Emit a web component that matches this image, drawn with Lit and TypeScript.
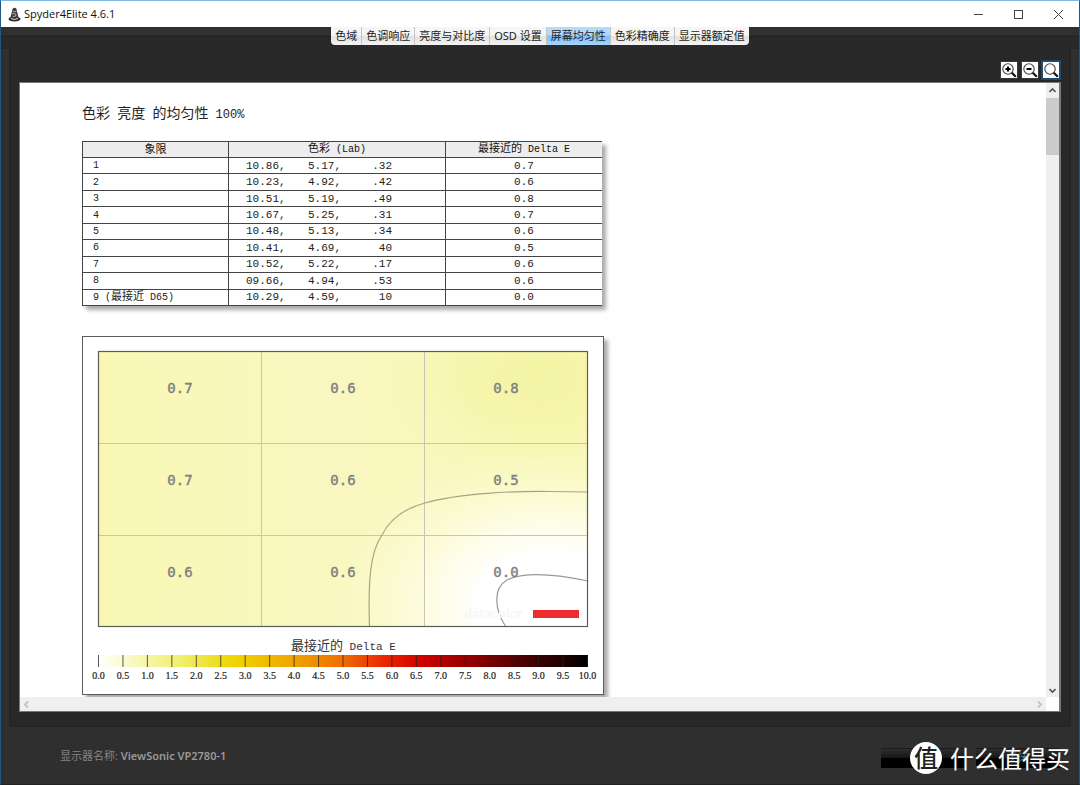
import { LitElement, html, svg, css } from "lit";
import { customElement, state } from "lit/decorators.js";
import { classMap } from "lit/directives/class-map.js";

const TABS = ["色域", "色调响应", "亮度与对比度", "OSD 设置", "屏幕均匀性", "色彩精确度", "显示器额定值"];

const ROWS: [string, string, string, string, string][] = [
  ["1", "10.86,", "5.17,", ".32", "0.7"],
  ["2", "10.23,", "4.92,", ".42", "0.6"],
  ["3", "10.51,", "5.19,", ".49", "0.8"],
  ["4", "10.67,", "5.25,", ".31", "0.7"],
  ["5", "10.48,", "5.13,", ".34", "0.6"],
  ["6", "10.41,", "4.69,", "40", "0.5"],
  ["7", "10.52,", "5.22,", ".17", "0.6"],
  ["8", "09.66,", "4.94,", ".53", "0.6"],
  ["9", "10.29,", "4.59,", "10", "0.0"],
];

const GRID = [
  ["0.7", "0.6", "0.8"],
  ["0.7", "0.6", "0.5"],
  ["0.6", "0.6", "0.0"],
];

@customElement("uniformity-chart")
class UniformityChart extends LitElement {
  static styles = css`
    :host {
      display: block;
      box-sizing: border-box;
      width: 522px;
      border: 1px solid #5c5c5c;
      background: #fff;
      box-shadow: 4px 4px 4px #aaa;
    }
    .chart {
      display: block;
      width: 100%;
    }
    .value {
      font: 14px "DejaVu Sans Mono", "Liberation Mono", monospace;
      fill: #808080;
      stroke: #808080;
      stroke-width: 0.4;
      text-anchor: middle;
    }
    .legend {
      font: 13px "Liberation Mono", "Noto Sans CJK SC", monospace;
      fill: #333;
    }
    .latin {
      font-size: 11px;
    }
    .tick {
      font: 10px "Liberation Serif", serif;
      fill: #222;
      stroke: #222;
      stroke-width: 0.2;
      text-anchor: middle;
    }
    .brand {
      font: bold 14px "Lato", sans-serif;
      fill: #f7f7f6;
    }
  `;

  render() {
    const ticks = Array.from({ length: 21 }, (_, i) => i);
    return html`
      <svg class="chart" viewBox="0 0 520 357" role="img" aria-label="最接近的 Delta E">
        <defs>
          <linearGradient id="base">
            <stop offset="0" stop-color="#f8f8b4" />
            <stop offset="0.45" stop-color="#f9f7c0" />
            <stop offset="1" stop-color="#f9f8ba" />
          </linearGradient>
          <radialGradient id="corner" gradientUnits="userSpaceOnUse" cx="0" cy="0" r="1"
            gradientTransform="translate(455 40) scale(180 120)">
            <stop offset="0" stop-color="#f4f4a4" />
            <stop offset="0.4" stop-color="#f5f5aa" stop-opacity="0.8" />
            <stop offset="1" stop-color="#f8f7b8" stop-opacity="0" />
          </radialGradient>
          <radialGradient id="light" gradientUnits="userSpaceOnUse" cx="0" cy="0" r="1"
            gradientTransform="translate(465 265) scale(225 160)">
            <stop offset="0" stop-color="#fff" />
            <stop offset="0.3" stop-color="#fff" />
            <stop offset="0.5" stop-color="#fffff6" stop-opacity="0.75" />
            <stop offset="0.75" stop-color="#fdfde0" stop-opacity="0.4" />
            <stop offset="1" stop-color="#fbfad0" stop-opacity="0" />
          </radialGradient>
          <linearGradient id="heat">
            <stop offset="0" stop-color="#fff" />
            <stop offset="0.1" stop-color="#f6f6a8" />
            <stop offset="0.17" stop-color="#f1ef6a" />
            <stop offset="0.28" stop-color="#efd400" />
            <stop offset="0.4" stop-color="#f0a400" />
            <stop offset="0.5" stop-color="#f06c00" />
            <stop offset="0.58" stop-color="#ea2a00" />
            <stop offset="0.66" stop-color="#d00000" />
            <stop offset="0.8" stop-color="#780000" />
            <stop offset="0.9" stop-color="#380000" />
            <stop offset="1" stop-color="#000" />
          </linearGradient>
        </defs>
        <rect x="15" y="15" width="490" height="275" fill="url(#base)" />
        <rect x="15" y="15" width="490" height="275" fill="url(#corner)" />
        <rect x="15" y="15" width="490" height="275" fill="url(#light)" />
        <path d="M178.5 15V290M341.5 15V290M15 106.5H505M15 198.5H505" fill="none" stroke="#c6c5b6" />
        <path d="M286.500 290C285 245 287 215 299 198C307 182 323 171 342 166C376 156 432 154 467 154.500L505 155"
          fill="none" stroke="#a4a386" stroke-width="1.200" />
        <path d="M423 290C411 272 410 251 424 243C442 234 472 237 505 244" fill="none" stroke="#999" stroke-width="1.200" />
        <text class="brand" x="381" y="281">datacolor</text>
        <rect x="450" y="273" width="46" height="8" fill="#ee2c30" />
        <rect x="15.500" y="14.500" width="489" height="275" fill="none" stroke="#5c5c58" stroke-width="1.200" />
        ${GRID.map((row, r) =>
          row.map((v, c) => svg`<text class="value" x=${97 + c * 163} y=${56 + r * 92}>${v}</text>`)
        )}
        <text class="legend" x="208" y="313">最接近的<tspan class="latin" xml:space="preserve"> Delta E</tspan></text>
        <rect x="15" y="318" width="490" height="12" fill="url(#heat)" />
        ${ticks.map((i) => {
          const x = 15.5 + i * 24.45;
          return svg`
            <path d="M${x} 318V330" stroke="#222" stroke-opacity="0.75" />
            <text class="tick" x=${x} y="342">${(i / 2).toFixed(1)}</text>`;
        })}
      </svg>
    `;
  }
}

@customElement("app-root")
class AppRoot extends LitElement {
  @state() private active = 4;

  static styles = css`
    :host {
      display: flex;
      flex-direction: column;
      box-sizing: border-box;
      height: 100vh;
      overflow: hidden;
      border: 1px solid #1b5787;
      border-top-color: #7db8e6;
      border-bottom-color: #222;
      background: #2f2f2f;
      font-family: "Noto Sans", "Noto Sans CJK SC", sans-serif;
      font-size: 11px;
    }
    button {
      margin: 0;
      padding: 0;
      border: 0;
      background: none;
      font: inherit;
      color: inherit;
    }
    .titlebar {
      display: flex;
      align-items: center;
      flex: none;
      height: 26px;
      padding: 0 1px 0 7px;
      background: #fff;
      color: #111;
    }
    .logo {
      width: 13px;
      height: 15px;
      margin-right: 3px;
    }
    .name {
      flex: 1;
      margin: 0;
      padding-bottom: 2px;
      font: 11px "Open Sans", sans-serif;
    }
    .win {
      display: grid;
      place-items: center;
      width: 40px;
      height: 26px;
    }
    .win svg {
      width: 11px;
      height: 11px;
    }
    .tabbar {
      display: flex;
      justify-content: center;
      flex: none;
      height: 22px;
      background: linear-gradient(#303030 0 8px, #222 9px, #292929 11px 21px, #222);
    }
    .tabs {
      display: flex;
      height: 18px;
      overflow: hidden;
      border-radius: 0 0 4px 4px;
      background: linear-gradient(#f6f6f6 0 45%, #e2e2e2 55%, #f4f4f4);
    }
    .tab {
      padding: 0 4px;
      border-right: 1px solid #c4c4c4;
      color: #222;
      line-height: 16px;
      white-space: nowrap;
    }
    .tab:last-child {
      border-right: 0;
    }
    .tab.on {
      background: linear-gradient(#b4dafe 0 40%, #7fbcfb 55%, #a6d6ff);
    }
    .panel {
      display: flex;
      flex-direction: column;
      flex: 1;
      min-height: 0;
      margin: 0 8px;
      padding: 12px 9px 14px 9px;
      border: 1px solid #232323;
      border-top: 0;
      border-radius: 0 0 4px 4px;
      background: #282828;
    }
    .tools {
      display: flex;
      justify-content: flex-end;
      gap: 3px;
      flex: none;
      height: 18px;
      margin-bottom: 3px;
      padding-right: 1px;
    }
    .tool {
      width: 18px;
      height: 18px;
      border: 1px solid #3a3a3a;
      background: #fff;
    }
    .tool.on {
      border-color: #1d4a70;
      outline: 1px solid #1d4a70;
    }
    .tool svg {
      display: block;
      width: 100%;
      height: 100%;
    }
    .viewer {
      display: grid;
      grid-template: minmax(0, 1fr) 14px / minmax(0, 1fr) 13px;
      flex: 1;
      min-height: 0;
      border: 1px solid #777;
      border-right-width: 2px;
      background: #fff;
    }
    .page {
      overflow: hidden;
      padding: 18px 62px 0;
      color: #222;
    }
    .heading {
      margin: 0 0 18px;
      font: 14px/22px "Noto Sans CJK SC", sans-serif;
      white-space: pre;
    }
    .heading .latin {
      font: 12px "Liberation Mono", monospace;
    }
    .data {
      width: 520px;
      height: 165px;
      margin-bottom: 30px;
      border-collapse: collapse;
      table-layout: fixed;
      box-shadow: 4px 4px 4px #aaa;
      background: #fff;
      font: 11px/14px "Liberation Mono", "Noto Sans CJK SC", monospace;
    }
    .data th,
    .data td {
      padding: 0;
      border: 1px solid #444;
      font-weight: 400;
      text-align: center;
    }
    .data tr > :last-child {
      border-right: 0;
    }
    .data thead th {
      background: #ededed;
      color: #111;
    }
    .data .latin {
      font-size: 10px;
      white-space: pre;
    }
    .data tbody th {
      padding-left: 10px;
      text-align: left;
    }
    .data tbody th .num {
      font-size: 10px;
    }
    .lab {
      display: grid;
      grid-template-columns: 62px 62px 22px;
      padding-left: 17px;
      text-align: left;
    }
    .lab span:last-child {
      text-align: right;
    }
    .c1 {
      width: 146px;
    }
    .c2 {
      width: 217px;
    }
    .vbar {
      display: flex;
      flex-direction: column;
      background: #efefef;
    }
    .hbar {
      display: flex;
      justify-content: space-between;
      background: #efefef;
    }
    .arrow {
      display: grid;
      place-items: center;
      width: 13px;
      height: 14px;
    }
    .arrow svg {
      width: 7px;
      height: 7px;
    }
    .thumb {
      height: 57px;
      margin: 1px 0 auto;
      background: #cbcbcb;
    }
    .footer {
      display: flex;
      align-items: center;
      justify-content: space-between;
      flex: none;
      height: 57px;
      padding: 0 11px 0 59px;
      color: #999;
    }
    .display {
      margin: 0;
      padding-bottom: 2px;
      font-weight: 600;
    }
    .label {
      color: #858585;
      font-weight: 400;
    }
    .actions {
      position: relative;
      display: flex;
      gap: 11px;
      padding: 4px 8px 0 0;
    }
    .action {
      width: 84px;
      height: 20px;
      border-top: 1px solid #1a1a1a;
      background: linear-gradient(#2e2e2e, #181818 45%, #000 50%);
      color: #4e93a6;
      line-height: 18px;
    }
    .watermark {
      position: absolute;
      right: -2px;
      top: -2px;
      display: flex;
      align-items: center;
      gap: 8px;
      color: #fff;
      font: 24px/32px "Noto Sans CJK SC", sans-serif;
      white-space: nowrap;
    }
    .seal {
      width: 32px;
      height: 32px;
      border-radius: 50%;
      background: #fff;
      color: #222;
      font-size: 24px;
      font-weight: 500;
      line-height: 30px;
      text-align: center;
    }
    .brand {
      text-shadow: 0 0 2px #333;
    }
  `;

  private lens(mark: string) {
    return svg`
      <svg viewBox="0 0 16 16" aria-hidden="true">
        <circle cx="7" cy="7" r="5.200" fill="#fff" stroke="#444" stroke-width="1.1" />
        <path d="M10.800 10.800L14.800 14.800" stroke="#111" stroke-width="2.200" />
        <path d=${mark} stroke="#000" stroke-width="2" />
      </svg>`;
  }

  private chevron(d: string, color: string) {
    return svg`<svg viewBox="0 0 7 7" aria-hidden="true"><path d=${d} fill="none" stroke=${color} stroke-width="1.600" /></svg>`;
  }

  render() {
    return html`
      <header class="titlebar">
        <svg class="logo" viewBox="0 0 13 15" aria-hidden="true">
          <ellipse cx="6.500" cy="12" rx="6" ry="2.600" fill="#2b2b2b" />
          <path d="M4.500 2Q6.500 -0.500 8.500 2L10.500 10.500Q6.500 13 2.500 10.500Z" fill="#3a3a3a" />
          <path d="M4.600 4Q6.500 5.500 8.600 4M4 7Q7 5.500 8 7.500T5 9.500" fill="none" stroke="#bbb" />
          <path d="M3 11.500Q6.500 13.500 10 11.500" fill="none" stroke="#ddd" />
        </svg>
        <h1 class="name">Spyder4Elite 4.6.1</h1>
        <button class="win" aria-label="最小化">
          <svg viewBox="0 0 11 11"><path d="M1 5.500H10" stroke="#444" /></svg>
        </button>
        <button class="win" aria-label="最大化">
          <svg viewBox="0 0 11 11"><rect x="1.500" y="1.500" width="8" height="8" fill="none" stroke="#444" /></svg>
        </button>
        <button class="win" aria-label="关闭窗口">
          <svg viewBox="0 0 11 11"><path d="M1 1L10 10M10 1L1 10" stroke="#444" /></svg>
        </button>
      </header>

      <nav class="tabbar">
        <div class="tabs">
          ${TABS.map(
            (t, i) => html`<button
              class=${classMap({ tab: true, on: i === this.active })}
              @click=${() => (this.active = i)}
            >${t}</button>`
          )}
        </div>
      </nav>

      <main class="panel">
        <div class="tools">
          <button class="tool" aria-label="放大">${this.lens("M4.500 7H9.500M7 4.500V9.500")}</button>
          <button class="tool" aria-label="缩小">${this.lens("M4.500 7H9.500")}</button>
          <button class="tool on" aria-label="适合">${this.lens("")}</button>
        </div>

        <div class="viewer">
          <section class="page">
            <h2 class="heading">色彩<span class="latin"> </span>亮度<span class="latin"> </span>的均匀性<span class="latin"> 100%</span></h2>
            <table class="data">
              <colgroup><col class="c1" /><col class="c2" /><col /></colgroup>
              <thead>
                <tr>
                  <th scope="col">象限</th>
                  <th scope="col">色彩<span class="latin"> (Lab)</span></th>
                  <th scope="col">最接近的<span class="latin"> Delta E</span></th>
                </tr>
              </thead>
              <tbody>
                ${ROWS.map(
                  ([n, l, a, b, d]) => html`<tr>
                    <th scope="row"><span class="num">${n}</span>${n === "9"
                      ? html`<span class="latin"> (</span>最接近<span class="latin"> D65)</span>`
                      : ""}</th>
                    <td><div class="lab"><span>${l}</span><span>${a}</span><span>${b}</span></div></td>
                    <td>${d}</td>
                  </tr>`
                )}
              </tbody>
            </table>
            <uniformity-chart></uniformity-chart>
          </section>
          <div class="vbar">
            <button class="arrow" aria-label="向上">${this.chevron("M0.500 5L3.500 2L6.500 5", "#555")}</button>
            <div class="thumb"></div>
            <button class="arrow" aria-label="向下">${this.chevron("M0.500 2L3.500 5L6.500 2", "#555")}</button>
          </div>
          <div class="hbar">
            <button class="arrow" aria-label="向左">${this.chevron("M5 0.500L2 3.500L5 6.500", "#bbb")}</button>
            <button class="arrow" aria-label="向右">${this.chevron("M2 0.500L5 3.500L2 6.500", "#bbb")}</button>
          </div>
        </div>
      </main>

      <footer class="footer">
        <p class="display"><span class="label">显示器名称:</span> ViewSonic VP2780-1</p>
        <div class="actions">
          <button class="action" aria-label="返回"></button>
          <button class="action">关闭</button>
          <div class="watermark"><span class="seal">值</span><span class="brand">什么值得买</span></div>
        </div>
      </footer>
    `;
  }
}
